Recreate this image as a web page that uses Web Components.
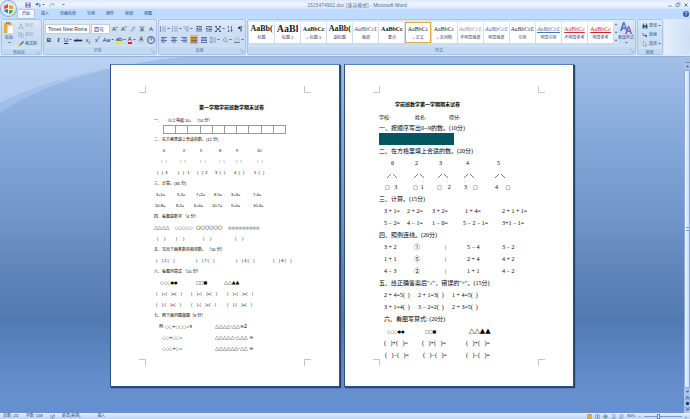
<!DOCTYPE html>
<html>
<head>
<meta charset="utf-8">
<title>1515474902.doc - Microsoft Word</title>
<style>
body { margin: 0; font-family: "Liberation Sans", "Noto Sans CJK SC", sans-serif; }
</style>
</head>
<body>
<word-window></word-window>
<script>
const RESET = `
  :host, *, *::before, *::after { box-sizing: border-box; }
  button, select { font: inherit; color: inherit; border: 0; margin: 0; padding: 0; background: none; appearance: none; }
`;
function define(name, render) {
  customElements.define(name, class extends HTMLElement {
    connectedCallback() {
      if (this.shadowRoot) return;
      this.attachShadow({ mode: 'open' }).innerHTML = render(this);
    }
  });
}

/* Icon drawings on a 12 x 12 grid */
const BLUE = '#2b4a86';
const st = (d, c = BLUE, w = 1.4) => `<path d="${d}" fill="none" stroke="${c}" stroke-width="${w}"/>`;
const fl = (d, c = BLUE) => `<path d="${d}" fill="${c}"/>`;
const ICONS = {
  save: fl('M1 1h10v10H1z', '#4a55b5') + fl('M3 1h6v4H3z', '#e8eefc') + fl('M3 7h6v4H3z', '#c8d2f0'),
  undo: st('M3 5c5-4 9 0 6 5', '#3566c8', 2) + fl('M0 6l5-5 1 6z', '#3566c8'),
  redo: st('M9 5c-5-4-9 0-6 5', '#a3b5d5', 1.8) + fl('M12 6L7 1 6 7z', '#a3b5d5'),
  paste: fl('M1 1h8v10H1z', '#e9a941') + fl('M3 0h4v2H3z', '#8a8f9c') + fl('M4 3h7v9H4z', '#fff') + st('M4.5 3.5h6v8h-6z', '#9db4d8', .5),
  cut: st('M3 1l5 7M9 1L4 8M2 9h2v2H2zM8 9h2v2H8z', '#8c9bb5', 1.2),
  copy: st('M1 1h6v7H1zM5 4h6v7H5z', '#9aa8c2', 1.1),
  brush: fl('M0 10l4-5 3 3-5 4z', '#e5bd3c') + st('M5 7l6-6', '#3b5c9e', 2.4),
  clear: st('M2 9l5-7h3L5 10z', '#6d83b8', 1.2) + fl('M1 8h5v3H1z', '#e8a7b5'),
  pinyin: st('M1 2h10M3 5h6M2 8h8M6 5v6M2 11l3-3M10 11L7 8', BLUE, 1.2),
  bullets: fl('M0 1h2v2H0zM0 5h2v2H0zM0 9h2v2H0z') + st('M4 2h8M4 6h8M4 10h8', '#5f7192', 1),
  numbers: st('M1 0v3M0 5h2M0 7h2M1 9v3', '#3566c8', 1) + st('M4 2h8M4 6h8M4 10h8', '#5f7192', 1),
  levels: st('M0 2h12M3 6h9M6 10h6', '#5f7192', 1.1),
  outdent: st('M0 1h12M5 4h7M5 7h7M0 10h12') + fl('M4 3v5L0 5.5z', '#1c55c5'),
  indent: st('M0 1h12M5 4h7M5 7h7M0 10h12') + fl('M0 3v5l4-2.5z', '#1c55c5'),
  cross: st('M1 2l10 8M11 2L1 10M0 1h4M8 1h4M0 11h4M8 11h4', '#1d2c4c', 1.5),
  sort: st('M3 1v4M3 7v4M1 1h3M1 11h4', '#3353a0', 1.2) + st('M9 0v10M7 8l2 3 2-3', '#26344f', 1.2),
  mark: fl('M7 1h4v1H7v9H6V6C1 7 1 1 6 1z', '#26344f') + st('M9 1v10', '#26344f', 1),
  left: st('M0 1h12M0 4h8M0 7h12M0 10h8'),
  center: st('M0 1h12M2 4h8M0 7h12M2 10h8'),
  right: st('M0 1h12M4 4h8M0 7h12M4 10h8'),
  justify: st('M0 1h12M0 4h12M0 7h12M0 10h12'),
  spread: st('M0 1h12M0 4h12M0 7h12M1 9v3M11 9v3M0 11h12'),
  spacing: st('M5 2h7M5 6h7M5 10h7', '#5f7192', 1.1) + st('M2 0v12M0 3l2-3 2 3M0 9l2 3 2-3', '#3566c8', 1),
  bucket: st('M2 6l4-5 4 5-4 4z', '#60738f', 1.1) + fl('M9 7l3 4H9z', '#d99f3a'),
  border: st('M1 1h10v9M1 1v9M6 1v9M1 5h10', '#a0aec5', .8) + st('M0 11h12', '#46587e', 1.4),
  find: fl('M1 4h4v7H1zM7 4h4v7H7zM2 1h2v3H2zM8 1h2v3H8zM5 5h2v3H5z', '#38537f'),
  swap: st('M2 2v5h4M9 11V6', '#3566c8', 1.5) + fl('M6 5l4 2-4 3z', '#38537f'),
  pick: `<path d="M3 1l6 6H6l2 4-2 1-2-4-2 2z" fill="#fff" stroke="#44587e" stroke-width=".8"/>`,
  styles: `<path d="M0 9L3 0h1.500l3 9H6L5.200 7H2.500L2 9zM3 5.500h2L4 2z" fill="#4c70c6"/><path d="M5 12L8 4h1.200l3 8h-1.700l-.6-2H7.500l-.7 2zM8 8.600h1.500l-.8-2.400z" fill="#8b62b8"/>`,
  help: `<circle cx="6" cy="6" r="6" fill="#2c5cc4"/><path d="M4 4c0-3 5-2 4 0L6 6v2M6 9v1" fill="none" stroke="#fff" stroke-width="1.3"/>`,
  min: st('M3 8h6', '#5a6d90', 1.6),
  max: st('M2 9V4h6v5zM4 4V2h6v5', '#5a6d90', 1.2),
  close: st('M3 3l6 6M9 3l-6 6', '#5a6d90', 1.8),
  book: st('M1 3l5 2 5-4v7l-5 3-5-2z', '#51709f', 1) + st('M4 6l2 2 4-6', '#2f66c0', 1.5),
  print: st('M2 1h8v10H2zM4 4h4M4 7h4', '#8c6b20', 1.2),
  read: st('M1 2h5v8H1zM6 2h5v8H6z', '#58759f', 1.2),
  web: `<circle cx="6" cy="6" r="4.500" fill="#a9d29a" stroke="#3b75a8"/><path d="M2 6h8M6 2v8" stroke="#3b75a8" fill="none"/>`,
  outline: st('M1 2h10M4 5h7M4 8h7M1 11h10', '#58759f', 1.1),
  draft: st('M1 2h10M1 5h10M1 8h10M1 11h6', '#58759f', 1.1),
  up: fl('M2 8h8L6 3z', '#40619b'),
  down: fl('M2 4h8L6 9z', '#40619b'),
  dup: st('M2 7l4-4 4 4M2 11l4-4 4 4', '#173b78', 1.8),
  ddown: st('M2 1l4 4 4-4M2 5l4 4 4-4', '#173b78', 1.8),
  dot: `<circle cx="6" cy="6" r="4" fill="#173b78"/>`,
  corner: st('M1 6V1h5M5 5l5 5M10 5v5H5', '#7d9cca', 1.3)
};
define('word-icon', el => `<style>
  :host { display: inline-flex; flex: none; width: 6px; height: 6px; }
  svg { width: 100%; height: 100%; display: block; }
</style><svg viewBox="0 0 12 12" aria-hidden="true">${ICONS[el.getAttribute('name')]}</svg>`);

/* Tool button: an icon or slotted glyph, with an optional arrow */
define('tool-button', el => `<style>${RESET}
  :host { display: flex; flex: none; height: 9px; }
  button { display: flex; align-items: center; justify-content: center; gap: 1px; min-width: 8px; height: 9px; border-radius: 1px; white-space: nowrap; }
  :host([on]) button { background: linear-gradient(#f7c868, #f6a623); outline: 1px solid #d7b468; outline-offset: -1px; }
  i { border: 1px solid transparent; border-top-color: #4c6694; border-bottom: 0; width: 3px; }
</style><button aria-label="${el.getAttribute('label') || ''}"><slot></slot>${el.hasAttribute('drop') ? '<i></i>' : ''}</button>`);

define('title-bar', () => `<style>${RESET}
  :host { display: grid; grid-template-columns: 1fr auto 1fr; align-items: center; height: 9px; padding: 0 0 0 24px; background: linear-gradient(#dfeafa, #edf4fd 50%, #d3e4f9); font-size: 5px; line-height: 8px; color: #66758f; }
  div { display: flex; align-items: center; gap: 3px; }
  .quick { color: #46618f; }
  .win { justify-content: flex-end; gap: 0; }
  h1 { margin: 0; font: inherit; white-space: nowrap; }
  b { font-weight: 400; color: #3f66a8; }
</style>
<div class="quick"><tool-button label="保存"><word-icon name="save"></word-icon></tool-button><tool-button label="撤消" drop><word-icon name="undo"></word-icon></tool-button><tool-button label="恢复"><word-icon name="redo"></word-icon></tool-button><tool-button label="自定义" drop></tool-button></div>
<h1>1515474902.doc [兼容模式] <b>- Microsoft Word</b></h1>
<div class="win"><tool-button label="最小化"><word-icon name="min"></word-icon></tool-button><tool-button label="还原"><word-icon name="max"></word-icon></tool-button><tool-button label="关闭"><word-icon name="close"></word-icon></tool-button></div>`);

define('tab-strip', () => `<style>${RESET}
  :host { display: flex; align-items: stretch; height: 10px; padding: 0 0 0 17px; background: #bfdbff; font-size: 4px; line-height: 10px; color: #1d4688; }
  button { padding: 0 5px; height: 10px; border-radius: 2px 2px 0 0; }
  button[aria-selected=true] { background: linear-gradient(#fff, #e2edfa); box-shadow: inset 0 0 0 1px #a9c6ec; }
  nav { display: flex; flex: 1; gap: 1px; }
</style><nav role="tablist">${['开始', '插入', '页面布局', '引用', '邮件', '审阅', '视图'].map((t, i) => `<button role="tab" aria-selected="${!i}">${t}</button>`).join('')}</nav>
<tool-button label="帮助"><word-icon name="help"></word-icon></tool-button>`);

define('ribbon-group', el => `<style>${RESET}
  :host { display: flex; flex-direction: column; border: 1px solid #a9c4e6; border-radius: 2px; background: linear-gradient(#dfebf8, #cfdff2 30%, #c9dcf1 70%, #d9e9fa); overflow: hidden; }
  .body { flex: 1; display: flex; padding: 1px; min-width: 0; }
  footer { display: flex; align-items: center; height: 7px; font-size: 4px; line-height: 7px; color: #4a72ae; background: #c2d9f1; padding-right: 1px; }
  footer span { flex: 1; text-align: center; }
  word-icon { width: 4px; height: 4px; }
</style><div class="body"><slot></slot></div><footer><span>${el.getAttribute('label')}</span>${el.hasAttribute('more') ? '<word-icon name="corner"></word-icon>' : ''}</footer>`);

define('style-card', el => `<style>${RESET}
  :host { display: flex; flex: 1 1 0; min-width: 0; }
  button { flex: 1; min-width: 0; display: flex; flex-direction: column; align-items: center; background: #fff; height: 21px; overflow: hidden; padding-top: 1px; }
  :host([on]) button { box-shadow: inset 0 0 0 1px #e8a83a; }
  .aa { height: 12px; line-height: 12px; font-family: "Liberation Serif", serif; font-size: 6px; white-space: nowrap; color: ${el.getAttribute('ink') || '#222'}; max-width: 23px; overflow: hidden; }
  .lg { font-size: 8px; font-weight: 700; } .xl { font-size: 10px; font-weight: 700; } .md { font-size: 6px; font-weight: 700; } .b { font-weight: 700; } .it { font-style: italic; } .u { text-decoration: underline; }
  .nm { font-size: 4px; line-height: 6px; color: #2d3f78; white-space: nowrap; }
</style><button><span class="aa ${el.getAttribute('kind') || ''}">${el.getAttribute('sample')}</span><span class="nm">${el.getAttribute('name')}</span></button>`);

const STYLES = [
  ['标题', 'AaBb(', 'lg'], ['标题 1', 'AaBl', 'xl'], ['+ 标题 3', 'AaBbCc', 'md'], ['副标题', 'AaBb(', 'lg'],
  ['强调', 'AaBbCcD', 'it', '#555'], ['要点', 'AaBbCc', 'b', '#111'], ['+ 正文', 'AaBbCc', '', '#222', 1], ['+ 无间隔', 'AaBbCc', '', '#222'],
  ['不明显强调', 'AaBbCcD', 'it', '#999'], ['明显强调', 'AaBbCcD', 'it', '#4577b8'], ['引用', 'AaBbCcD', 'it', '#333'],
  ['明显引用', 'AaBbCcD', 'it u', '#4577b8'], ['不明显参考', 'AaBbCc', 'u', '#c33'], ['明显参考', 'AaBbCc', 'u', '#d02020']
];
const tb = (icon, label, drop) => `<tool-button label="${label}" ${drop ? 'drop' : ''}><word-icon name="${icon}"></word-icon></tool-button>`;

define('ribbon-bar', () => `<style>${RESET}
  :host { display: flex; gap: 1px; height: 38px; padding: 0 1px 1px; background: linear-gradient(#dce9f8, #cbddf2 60%, #dcecfc); border-bottom: 1px solid #8fb2df; font-size: 4px; line-height: 6px; color: #3c5687; }
  .rows { flex: 1; display: flex; flex-direction: column; justify-content: space-between; padding: 3px 0 2px; }
  .row { display: flex; align-items: center; justify-content: space-between; }
  .clip { flex: 0 0 41px; } .font { flex: 0 0 114px; } .para { flex: 0 0 88px; } .sty { flex: 1 1 0; min-width: 0; } .edit { flex: 0 0 26px; }
  .rest { flex: 0 0 25px; background: linear-gradient(90deg, #e3effb, #cfe1f6); }
  .big { display: flex; flex-direction: column; align-items: center; gap: 1px; padding-top: 1px; white-space: nowrap; }
  .big word-icon { width: 12px; height: 12px; }
  .big i { border: 1px solid transparent; border-top-color: #4c6694; border-bottom: 0; width: 3px; }
  .list { justify-content: space-between; align-items: flex-start; padding: 0 0 0 3px; }
  .off { color: #96a6c0; }
  select { background: #fff; border: 1px solid #bed0e8; height: 10px; padding: 0 2px; font-size: 5px; line-height: 8px; color: #26344f; }
  .face { width: 45px; } .size { width: 19px; }
  .g { font-size: 6px; line-height: 8px; color: #1f3155; }
  .b { font-weight: 700; } .i { font-style: italic; font-family: "Liberation Serif", serif; font-weight: 700; } .u { text-decoration: underline; } .s { text-decoration: line-through; font-size: 5px; }
  .hl { border-bottom: 2px solid #f2e51e; line-height: 6px; } .red { border-bottom: 2px solid #e02020; line-height: 6px; } .sh { background: #c3cbd8; line-height: 7px; }
  .ring { border: 1px solid #46587e; border-radius: 50%; width: 8px; height: 8px; line-height: 6px; font-size: 4px; text-align: center; }
  sub, sup { font-size: 3px; line-height: 0; }
  .gallery { flex: 1; min-width: 0; display: flex; gap: 1px; padding-top: 1px; }
  .scroll { display: flex; flex-direction: column; justify-content: space-between; height: 21px; background: #dbe7f6; }
  .scroll word-icon { width: 4px; height: 5px; }
</style>
<ribbon-group class="clip" label="剪贴板" more>
  <button class="big"><word-icon name="paste"></word-icon>粘贴<i></i></button>
  <div class="rows list"><tool-button label="剪切" class="off"><word-icon name="cut"></word-icon>剪切</tool-button><tool-button label="复制" class="off"><word-icon name="copy"></word-icon>复制</tool-button><tool-button label="格式刷"><word-icon name="brush"></word-icon>格式刷</tool-button></div>
</ribbon-group>
<ribbon-group class="font" label="字体" more><div class="rows">
  <div class="row"><select class="face" aria-label="字体"><option>Times New Roman</option></select><select class="size" aria-label="字号"><option>四号</option></select>
    <tool-button label="增大"><span class="g">A<sup>▴</sup></span></tool-button><tool-button label="缩小"><span class="g">A<sup>▾</sup></span></tool-button>${tb('clear', '清除')}${tb('pinyin', '拼音')}<tool-button label="边框"><span class="g">A</span></tool-button></div>
  <div class="row"><tool-button label="加粗"><span class="g b">B</span></tool-button><tool-button label="倾斜"><span class="g i">I</span></tool-button><tool-button label="下划线" drop><span class="g u">U</span></tool-button><tool-button label="删除线"><span class="g s">abe</span></tool-button><tool-button label="下标"><span class="g">x<sub>2</sub></span></tool-button><tool-button label="上标"><span class="g">x<sup>2</sup></span></tool-button><tool-button label="大小写" drop><span class="g">Aa</span></tool-button><tool-button label="突出显示" drop><span class="g hl">ab</span></tool-button><tool-button label="颜色" drop><span class="g red">A</span></tool-button><tool-button label="底纹"><span class="g sh">A</span></tool-button><tool-button label="带圈"><span class="ring">字</span></tool-button></div>
</div></ribbon-group>
<ribbon-group class="para" label="段落" more><div class="rows">
  <div class="row">${tb('bullets', '项目符号', 1)}${tb('numbers', '编号', 1)}${tb('levels', '多级列表', 1)}${tb('outdent', '减少缩进')}${tb('indent', '增加缩进')}${tb('cross', '中文版式', 1)}${tb('sort', '排序')}${tb('mark', '标记')}</div>
  <div class="row">${tb('left', '左对齐')}${tb('center', '居中')}${tb('right', '右对齐')}<tool-button label="两端对齐" on><word-icon name="justify"></word-icon></tool-button>${tb('spread', '分散')}${tb('spacing', '行距', 1)}${tb('bucket', '底纹', 1)}${tb('border', '框线', 1)}</div>
</div></ribbon-group>
<ribbon-group class="sty" label="样式" more>
  <div class="gallery">${STYLES.map(([n, s, k, c, on]) => `<style-card name="${n}" sample="${s}" kind="${k}" ${c ? `ink="${c}"` : ''} ${on ? 'on' : ''}></style-card>`).join('')}
    <div class="scroll"><word-icon name="up"></word-icon><word-icon name="down"></word-icon><word-icon name="down"></word-icon></div></div>
  <button class="big"><word-icon name="styles"></word-icon>更改样式<i></i></button>
</ribbon-group>
<ribbon-group class="edit" label="编辑"><div class="rows list"><tool-button label="查找" drop><word-icon name="find"></word-icon>查找</tool-button><tool-button label="替换"><word-icon name="swap"></word-icon>替换</tool-button><tool-button label="选择" drop><word-icon name="pick"></word-icon>选择</tool-button></div></ribbon-group>
<div class="rest"></div>`);

/* A line of the document; its cells start at the line's tab stops */
define('doc-line', el => {
  const stops = (el.getAttribute('stops') || '0').split(' ').map(Number);
  const cols = stops.map((s, i) => i + 1 < stops.length ? `${stops[i + 1] - s}px` : '1fr').join(' ');
  return `<style>
  :host { display: grid; grid-template-columns: ${cols}; padding-left: ${stops[0]}px; align-items: center; height: var(--pitch); white-space: pre; }
</style><slot></slot>`;
});
const cells = list => list.map(t => `<span>${t}</span>`).join('');
const line = (stops, ...list) => `<doc-line stops="${stops}">${cells(list)}</doc-line>`;
const shape = (kind, text) => `<span class="${kind}">${text}</span>`;

define('paper-sheet', () => `<style>${RESET}
  :host { display: block; position: relative; flex: 0 1 230px; background: #fff; border: 1px solid #2c4f86; border-top-color: #5a7fb8; box-shadow: 1px 1px 1px #24426f; }
  i { position: absolute; width: 7px; height: 7px; border: 0 solid #c4c4c4; }
  .tl { left: 28px; top: 21px; border-width: 0 1px 1px 0; } .tr { right: 28px; top: 21px; border-width: 0 0 1px 1px; }
  .bl { left: 28px; bottom: 20px; border-width: 1px 1px 0 0; } .br { right: 28px; bottom: 20px; border-width: 1px 0 0 1px; }
</style><i class="tl"></i><i class="tr"></i><i class="bl"></i><i class="br"></i><slot></slot>`);

define('exam-first', () => `<style>
  :host { display: block; --pitch: 11px; padding: 37px 20px 32px 43px; font-size: 4px; line-height: 6px; color: #000; }
  h2 { margin: 0 0 4px 45px; font-size: 5px; line-height: 11px; white-space: nowrap; }
  .short { --pitch: 8px; }
  table { border-collapse: collapse; width: 123px; height: 9px; margin-left: 9px; table-layout: fixed; }
  td { border: 1px solid #999; padding: 0; }
  .dots { font-family: "DejaVu Sans", sans-serif; font-size: 4px; }
  .shapes { font-family: "DejaVu Sans", sans-serif; font-size: 5px; }
  .pale { color: #555; }
</style>
<h2>第一学期学前班数学期末试卷</h2>
<doc-line class="short" stops="0 14">${cells(['一、', '以上等起 10。 （10 分）'])}</doc-line>
<table aria-label="数字格"><tr>${'<td></td>'.repeat(10)}</tr></table>
${line('0', '二、在方格里填上合适的数。(12 分)')}
${line('9 29 46 65 82 103', 6, 2, 5, 8, 9, 10)}
<doc-line class="pale" stops="7 26 46 65 82 103">${cells(Array(6).fill('/   \\'))}</doc-line>
${line('3 24 43 61 80 100', '(   )  3', '(   )   1', '(   )  2', '3  (   )', '4  (   )', '5  (   )')}
${line('0', '三、计算。(36 分)')}
${line('2 23 42 60 77 99', '3+1=', '9-2=', '7+2=', '8-5=', '3+3=', '7-4=')}
${line('1 22 40 58 77 99', '10-8=', '8-2=', '6+6=', '10-7=', '9+0=', '10-4=')}
${line('0', '四、看图填数字 （4 分）')}
${line('0 21 42 74', shape('shapes', '△△△△'), shape('dots', '○○○○○'), shape('shapes', '○○○○○○'), shape('dots', '◎◎◎◎◎◎◎◎◎'))}
${line('3 22 49 81', '(     )', '(     )', '(     )', '(     )')}
${line('0', '五、写出下面各数的相邻数。 （16 分）')}
${line('2 42 82 119', '(    ) 2 (    )', '(    ) 7 (    )', '(    ) 4 (    )', '(    ) 8 (    )')}
${line('0', '六、看图列算式 （10 分）')}
${line('6 42 70', shape('dots', '○○○●●'), shape('dots', '□□■'), shape('shapes', '△△▲▲'))}
${line('2 37 73', ...Array(3).fill('(    )+(    )=(    )'))}
${line('2 37 73', ...Array(3).fill('(    )-(    )=(    )'))}
${line('0', '七、照下面列题做题（8 分）')}
${line('5 61', '例: ' + shape('dots', '○○+○○○=5'), shape('shapes', '△△△△-△△=2'))}
${line('8 61', shape('dots', '○○+○○='), shape('shapes', '△△△△△-△△△ ='))}
${line('8 61', shape('dots', '○○○+○='), shape('shapes', '△△△△△△-△△ ='))}`);

const WEDGE = '<svg width="10" height="5" viewBox="0 0 10 5"><path d="M0 5L4 1M6 1l4 4" fill="none" stroke="#555" stroke-width=".8"/></svg>';
const BOX = shape('box', '□');
define('exam-second', () => `<style>
  :host { display: block; --pitch: 12px; padding: 35px 14px 25px 34px; font: 6px/8px "Liberation Serif", "Noto Sans CJK SC", serif; color: #000; }
  h2 { margin: 0 0 3px 16px; font-size: 5px; line-height: 10px; white-space: nowrap; }
  .info { --pitch: 10px; font-size: 5px; }
  .first { --pitch: 10px; }
  .block { width: 75px; height: 12px; background: #00585f; }
  svg { display: block; }
  .box, .dots, .shapes { font-family: "DejaVu Sans", sans-serif; }
  .box { font-size: 5px; } .dots { font-size: 4px; } .shapes { font-size: 7px; }
</style>
<h2>学前班数学第一学期期末试卷</h2>
<doc-line class="info" stops="0 36 70">${cells(['学校:', '姓名:', '得分:'])}</doc-line>
<doc-line class="first" stops="0"><span>一、按顺序写出0--9的数。(10分)</span></doc-line>
<div class="block"></div>
${line('0', '二、在方格里填上合适的数。(20分)')}
${line('12 36 60 87 118', 6, 2, 3, 4, 5)}
${line('8 35 59 85 116', WEDGE, WEDGE, WEDGE, WEDGE, WEDGE)}
${line('6 34 58 85 116', BOX + '   3', BOX + '  1', BOX + '    2', '3    ' + BOX, '4     ' + BOX)}
${line('0', '三、计算。(15分)')}
${line('5 28 53 86 123', '3 + 1=', '2 + 2=', '3 + 2=', '1 + 4=', '2 + 1 + 1=')}
${line('5 28 53 84 123', '5 − 2=', '4 − 1=', '1 − 0=', '5 − 2 − 1=', '3+1 − 1=')}
${line('0', '四、照例连线。(20分)')}
${line('5 35 66 88 123', '3 + 2', '①', '|', '5 − 4', '3 − 2')}
${line('5 35 66 88 123', '1 + 1', '⑤', '|', '2 + 4', '4 + 2')}
${line('5 35 66 88 123', '4 − 3', '②', '|', '1 + 1', '4 − 2')}
${line('0', '五、给正确答案后"√"，错误的"×"。(15分)')}
${line('5 39 73', '2 + 4=5(  )', '2 + 1=3(  )', '1 + 4=5(  )')}
${line('5 39 73', '3 + 1=4(  )', '3 − 2=2(  )', '2 + 3=5(  )')}
${line('5', '六、看图写算式: (20分)')}
${line('8 46 90', shape('dots', '○○○●●'), shape('dots', '□□■'), shape('shapes', '△△▲▲'))}
${line('5 43 87', ...Array(3).fill('(   )+(   )='))}
${line('6 44 87', ...Array(3).fill('(   )−(   )='))}`);

define('page-scroll', () => `<style>${RESET}
  :host { display: flex; flex: 0 0 6px; flex-direction: column; align-items: center; gap: 1px; background: #a9c4ea; padding: 1px 0; }
  .thumb { flex: 1; width: 6px; background: linear-gradient(90deg, #eef5fd, #c9dcf5); border: 1px solid #8aa9d6; border-radius: 1px; display: flex; align-items: center; justify-content: center; }
  .thumb::before { content: ""; width: 3px; height: 4px; border: 1px solid #7d9cca; border-width: 1px 0; }
  word-icon { width: 5px; height: 5px; }
</style><word-icon name="border"></word-icon><word-icon name="up"></word-icon><div class="thumb"></div><word-icon name="down"></word-icon><word-icon name="dup"></word-icon><word-icon name="dot"></word-icon><word-icon name="ddown"></word-icon>`);

define('work-area', () => `<style>${RESET}
  :host { display: flex; flex: 1; }
  main { flex: 1; position: relative; display: flex; justify-content: center; align-items: flex-start; gap: 4px; padding: 7px 0 26px; background: linear-gradient(#a3bfe9, #88abdc 20%, #7498cb 42%, #6389bd 56%, #517bb2 74%, #658fcc 92%, #6690cd); }
  .sweep { position: absolute; left: 0; top: 0; width: 180px; height: 56px; }
</style><main><svg class="sweep" viewBox="0 0 180 56" aria-hidden="true"><defs><linearGradient id="g" x2="0" y2="1"><stop stop-color="#b5cdf0"/><stop offset="1" stop-color="#9dbbe6"/></linearGradient></defs><path d="M0 0h180Q60 14 0 56z" fill="url(#g)"/><path d="M0 0h180Q60 14 0 46z" fill="#bcd3f3" opacity=".6"/></svg>
<paper-sheet><exam-first></exam-first></paper-sheet><paper-sheet><exam-second></exam-second></paper-sheet></main><page-scroll></page-scroll>`);

define('status-bar', () => `<style>${RESET}
  :host { display: flex; align-items: center; height: 6px; padding: 0 3px; background: linear-gradient(#e6f0fc, #b9d2f2); font-size: 4px; line-height: 6px; color: #1d3c78; white-space: nowrap; }
  .left { flex: 1; display: flex; align-items: center; gap: 7px; }
  .ins { padding-left: 10px; }
  .right { display: flex; align-items: center; gap: 3px; }
  word-icon { width: 5px; height: 5px; }
  .on { background: #f7c868; }
  input { appearance: none; width: 38px; height: 5px; margin: 0; background: linear-gradient(#7f9cc8, #7f9cc8) center / 100% 1px no-repeat; }
  input::-webkit-slider-thumb { appearance: none; width: 3px; height: 5px; background: #f2f7fe; border: 1px solid #6484b8; }
  button { line-height: 5px; }
</style><div class="left"><span>页数: 2/2</span><span>字数: 538</span><word-icon name="book"></word-icon><span>英语(美国)</span><span class="ins">插入</span></div>
<div class="right"><word-icon class="on" name="print"></word-icon><word-icon name="read"></word-icon><word-icon name="web"></word-icon><word-icon name="outline"></word-icon><word-icon name="draft"></word-icon><span>80%</span><button aria-label="缩小">−</button><input type="range" aria-label="显示比例" min="10" max="190" value="80"><button aria-label="放大">+</button></div>`);

define('office-button', () => `<style>${RESET}
  :host { display: block; position: absolute; left: 1px; top: 1px; }
  button { display: block; width: 15px; height: 15px; border-radius: 50%; background: radial-gradient(#fff, #dfe8f4 55%, #a9bddb); box-shadow: 0 0 0 1px #93abcd; }
  svg { display: block; width: 15px; height: 15px; }
</style><button aria-label="Office"><svg viewBox="0 0 15 15"><path d="M3 5l4-2v4l-4 1z" fill="#e8502c"/><path d="M8 4l4 1v3H8z" fill="#e9a32c"/><path d="M3 9l4-1v4l-3-1z" fill="#3f78c8"/><path d="M8 9h4l-1 3-3 1z" fill="#5aa545"/></svg></button>`);

define('word-window', () => `<style>
  :host { display: flex; flex-direction: column; position: relative; min-height: 100vh; }
</style><title-bar></title-bar><tab-strip></tab-strip><ribbon-bar></ribbon-bar><work-area></work-area><status-bar></status-bar><office-button></office-button>`);
</script>
</body>
</html>
